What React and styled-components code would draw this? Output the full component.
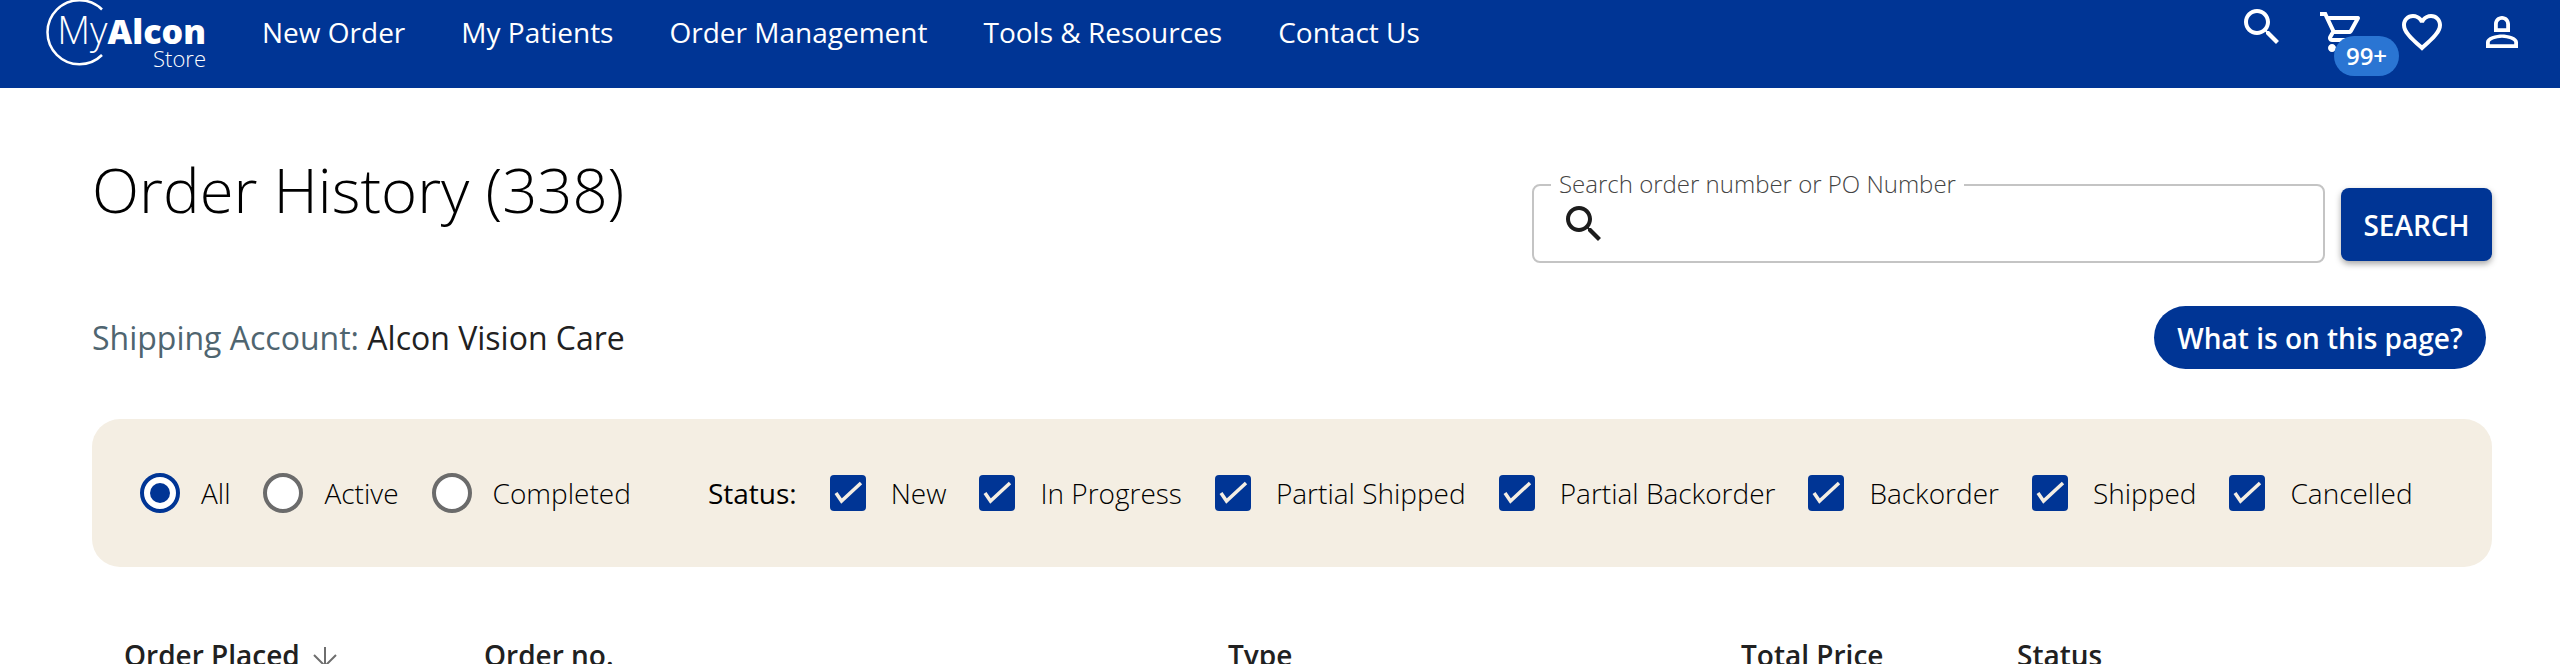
import React from 'react'
import styled, { createGlobalStyle } from 'styled-components'

const blue = '#003595'

const GlobalStyle = createGlobalStyle`
  html, body {
    margin: 0;
    height: 100%;
    overflow: hidden;
    background: #fff;
    font-family: 'Open Sans', sans-serif;
    color: #111;
  }
  * { box-sizing: border-box; }
`

const Page = styled.div`
  height: 664px;
  overflow: hidden;
`

const NavBar = styled.header`
  height: 88px;
  background: ${blue};
  display: flex;
  justify-content: space-between;
  color: #fff;
  padding-right: 34px;
`

const NavLeft = styled.div`
  display: flex;
  align-items: flex-start;
`

const Logo = styled.a`
  position: relative;
  width: 206px;
  padding: 12px 0 0 58px;
  margin-right: 56px;
  display: flex;
  flex-direction: column;
  align-items: flex-end;
  color: #fff;
`

const LogoArc = styled.svg`
  position: absolute;
  left: 40px;
  top: 0;
`

const LogoName = styled.div`
  font-size: 38px;
  line-height: 34px;
  font-weight: 300;
  white-space: nowrap;
  b { font-weight: 800; font-size: 34px; }
`

const LogoSub = styled.div`
  font-size: 22px;
  line-height: 20px;
  font-weight: 300;
`

const NavLinks = styled.nav`
  display: flex;
  gap: 56px;
  padding-top: 13px;
`

const NavLink = styled.a`
  font-size: 28px;
  line-height: 38px;
  color: #fff;
  white-space: nowrap;
`

const NavIcons = styled.div`
  display: flex;
  gap: 32px;
  padding-top: 8px;
  align-items: flex-start;
`

const IconButton = styled.span`
  position: relative;
  display: block;
  width: 48px;
  height: 48px;
  margin-top: ${(p) => p.$up ? `-${p.$up}px` : '0'};
`

const Badge = styled.span`
  position: absolute;
  left: 16px;
  top: 28px;
  width: 65px;
  height: 40px;
  border-radius: 20px;
  background: #2a75d3;
  color: #fff;
  font-size: 24px;
  font-weight: 600;
  line-height: 40px;
  text-align: center;
`

const Glyph = styled.svg`
  display: block;
  fill: currentColor;
  flex: none;
`

const Content = styled.main`
  padding: 60px 68px 0 92px;
`

const TopRow = styled.div`
  display: flex;
  justify-content: space-between;
  align-items: flex-start;
`

const Title = styled.h1`
  margin: 3px 0 0;
  font-size: 61.6px;
  line-height: 77px;
  font-weight: 300;
  color: #000;
`

const SearchGroup = styled.div`
  display: flex;
  gap: 16px;
  align-items: flex-start;
  margin-top: 36px;
`

const SearchField = styled.div`
  position: relative;
  width: 793px;
  height: 79px;
  border: 2px solid #c4c4c4;
  border-radius: 8px;
  display: flex;
  align-items: flex-start;
  padding: 14px 0 0 26px;
  color: #1c1c1c;
`

const FieldLabel = styled.label`
  position: absolute;
  left: 17px;
  top: -18px;
  padding: 0 8px;
  background: #fff;
  font-size: 24px;
  line-height: 32px;
  font-weight: 300;
  color: #444;
  white-space: nowrap;
`

const SearchInput = styled.input`
  flex: 1;
  border: 0;
  outline: 0;
  background: transparent;
  height: 48px;
  font: inherit;
`

const SearchButton = styled.button`
  width: 151px;
  height: 73px;
  margin-top: 4px;
  border: 0;
  border-radius: 8px;
  background: ${blue};
  color: #fff;
  font-family: inherit;
  font-size: 28px;
  font-weight: 600;
  box-shadow: 0 3px 6px rgba(0, 0, 0, 0.35);
`

const AccountRow = styled.div`
  display: flex;
  justify-content: space-between;
  align-items: center;
  margin-top: 43px;
  padding-right: 6px;
`

const Account = styled.div`
  font-size: 32px;
  line-height: 40px;
  color: #212121;
  span { color: #4f6570; }
`

const HelpButton = styled.button`
  width: 332px;
  height: 63px;
  border: 0;
  border-radius: 32px;
  background: ${blue};
  color: #fff;
  font-family: inherit;
  font-size: 28px;
  font-weight: 600;
`

const FilterPanel = styled.section`
  display: flex;
  align-items: center;
  height: 148px;
  margin-top: 50px;
  padding-left: 48px;
  border-radius: 28px;
  background: #f4eee3;
`

const FilterGroup = styled.div`
  display: flex;
  align-items: center;
  gap: ${(p) => p.$gap}px;
`

const Option = styled.label`
  display: flex;
  align-items: center;
  gap: ${(p) => p.$gap}px;
  font-size: 28px;
  font-weight: 300;
  color: #000;
  white-space: nowrap;
`

const Radio = styled.span`
  width: 40px;
  height: 40px;
  border-radius: 50%;
  border: 4px solid ${(p) => (p.$on ? blue : '#6b6b6b')};
  background: #fff;
  display: flex;
  align-items: center;
  justify-content: center;
  &::after {
    content: '';
    width: 20px;
    height: 20px;
    border-radius: 50%;
    background: ${(p) => (p.$on ? blue : 'transparent')};
  }
`

const Check = styled.span`
  width: 36px;
  height: 36px;
  border-radius: 4px;
  background: ${blue};
  svg { display: block; }
`

const StatusLabel = styled.span`
  margin: 0 33px 0 77px;
  font-size: 28px;
  font-weight: 500;
  color: #000;
`

const TableHead = styled.div`
  display: grid;
  grid-template-columns: 360px 744px 513px 276px 1fr;
  margin-top: 70px;
  padding-left: 32px;
`

const HeadCell = styled.div`
  display: flex;
  align-items: flex-start;
  gap: 12px;
  font-size: 28px;
  line-height: 36px;
  font-weight: 600;
  color: #212121;
`

const ArrowDown = styled.svg`
  margin-top: 9px;
  stroke: #6e6e6e;
  stroke-width: 2;
  fill: none;
`

const paths = {
  search: 'M15.5 14h-.79l-.28-.27C15.41 12.59 16 11.11 16 9.5 16 5.91 13.09 3 9.5 3S3 5.91 3 9.5 5.91 16 9.5 16c1.61 0 3.09-.59 4.23-1.57l.27.28v.79l5 4.99L20.49 19l-4.99-5zm-6 0C7.01 14 5 11.99 5 9.5S7.01 5 9.5 5 14 7.01 14 9.5 11.99 14 9.5 14z',
  cart: 'M15.55 13c.75 0 1.41-.41 1.75-1.03l3.58-6.49c.37-.66-.11-1.48-.87-1.48H5.21l-.94-2H1v2h2l3.6 7.59-1.35 2.44C4.52 15.37 5.48 17 7 17h12v-2H7l1.1-2h7.45zM6.16 6h12.15l-2.76 5H8.53L6.16 6zM7 18c-1.1 0-1.99.9-1.99 2S5.9 22 7 22s2-.9 2-2-.9-2-2-2zm10 0c-1.1 0-1.99.9-1.99 2s.89 2 1.99 2 2-.9 2-2-.9-2-2-2z',
  heart: 'M16.5 3c-1.74 0-3.41.81-4.5 2.09C10.91 3.81 9.24 3 7.5 3 4.42 3 2 5.42 2 8.5c0 3.78 3.4 6.86 8.55 11.54L12 21.35l1.45-1.32C18.6 15.36 22 12.28 22 8.5 22 5.42 19.58 3 16.5 3zm-4.4 15.55l-.1.1-.1-.1C7.14 14.24 4 11.39 4 8.5 4 6.5 5.5 5 7.5 5c1.54 0 3.04.99 3.57 2.36h1.87C13.46 5.99 14.96 5 16.5 5c2 0 3.5 1.5 3.5 3.5 0 2.89-3.14 5.74-7.9 10.05z',
  user: 'M12 5.9c1.16 0 2.1.94 2.1 2.1v2.1H9.9V8c0-1.16.94-2.1 2.1-2.1M12 4C9.79 4 8 5.79 8 8v4h8V8c0-2.21-1.79-4-4-4zm0 9.2c-2.67 0-8 1.14-8 3.8v3h16v-3c0-2.66-5.33-3.8-8-3.8zm0 1.7c2.97 0 6.1 1.46 6.1 2.1v1.1H5.9V17c0-.64 3.13-2.1 6.1-2.1z',
}

const Icon = ({ name, size = 48 }) => (
  <Glyph width={size} height={size} viewBox="0 0 24 24">
    <path d={paths[name]} />
  </Glyph>
)

const links = ['New Order', 'My Patients', 'Order Management', 'Tools & Resources', 'Contact Us']
const scopes = [{ label: 'All', on: true }, { label: 'Active' }, { label: 'Completed' }]
const statuses = ['New', 'In Progress', 'Partial Shipped', 'Partial Backorder', 'Backorder', 'Shipped', 'Cancelled']

export default function App() {
  return (
    <Page>
      <GlobalStyle />
      <NavBar>
        <NavLeft>
          <Logo>
            <LogoArc width="66" height="68" viewBox="0 0 66 68" fill="none" stroke="#fff" strokeWidth="2.5">
              <path d="M62 9.5A32 32 0 1 0 62 55" />
            </LogoArc>
            <LogoName>My<b>Alcon</b></LogoName>
            <LogoSub>Store</LogoSub>
          </Logo>
          <NavLinks>
            {links.map((l) => <NavLink key={l}>{l}</NavLink>)}
          </NavLinks>
        </NavLeft>
        <NavIcons>
          <IconButton $up={5}><Icon name="search" /></IconButton>
          <IconButton>
            <Icon name="cart" />
            <Badge>99+</Badge>
          </IconButton>
          <IconButton><Icon name="heart" /></IconButton>
          <IconButton><Icon name="user" /></IconButton>
        </NavIcons>
      </NavBar>
      <Content>
        <TopRow>
          <Title>Order History (338)</Title>
          <SearchGroup>
            <SearchField>
              <FieldLabel>Search order number or PO Number</FieldLabel>
              <Icon name="search" />
              <SearchInput />
            </SearchField>
            <SearchButton>SEARCH</SearchButton>
          </SearchGroup>
        </TopRow>
        <AccountRow>
          <Account><span>Shipping Account:</span> Alcon Vision Care</Account>
          <HelpButton>What is on this page?</HelpButton>
        </AccountRow>
        <FilterPanel>
          <FilterGroup $gap={33}>
            {scopes.map((s) => (
              <Option key={s.label} $gap={21}>
                <Radio $on={s.on} />
                {s.label}
              </Option>
            ))}
          </FilterGroup>
          <StatusLabel>Status:</StatusLabel>
          <FilterGroup $gap={33}>
            {statuses.map((s) => (
              <Option key={s} $gap={25}>
                <Check>
                  <svg width="36" height="36" viewBox="0 0 36 36" fill="none" stroke="#f4eee3" strokeWidth="3.5">
                    <path d="M6 18l5.5 8L31 8" />
                  </svg>
                </Check>
                {s}
              </Option>
            ))}
          </FilterGroup>
        </FilterPanel>
        <TableHead>
          <HeadCell>
            Order Placed
            <ArrowDown width="26" height="24" viewBox="0 0 26 24">
              <path d="M13 1v19M2 9l11 11 11-11" />
            </ArrowDown>
          </HeadCell>
          <HeadCell>Order no.</HeadCell>
          <HeadCell>Type</HeadCell>
          <HeadCell>Total Price</HeadCell>
          <HeadCell>Status</HeadCell>
        </TableHead>
      </Content>
    </Page>
  )
}
